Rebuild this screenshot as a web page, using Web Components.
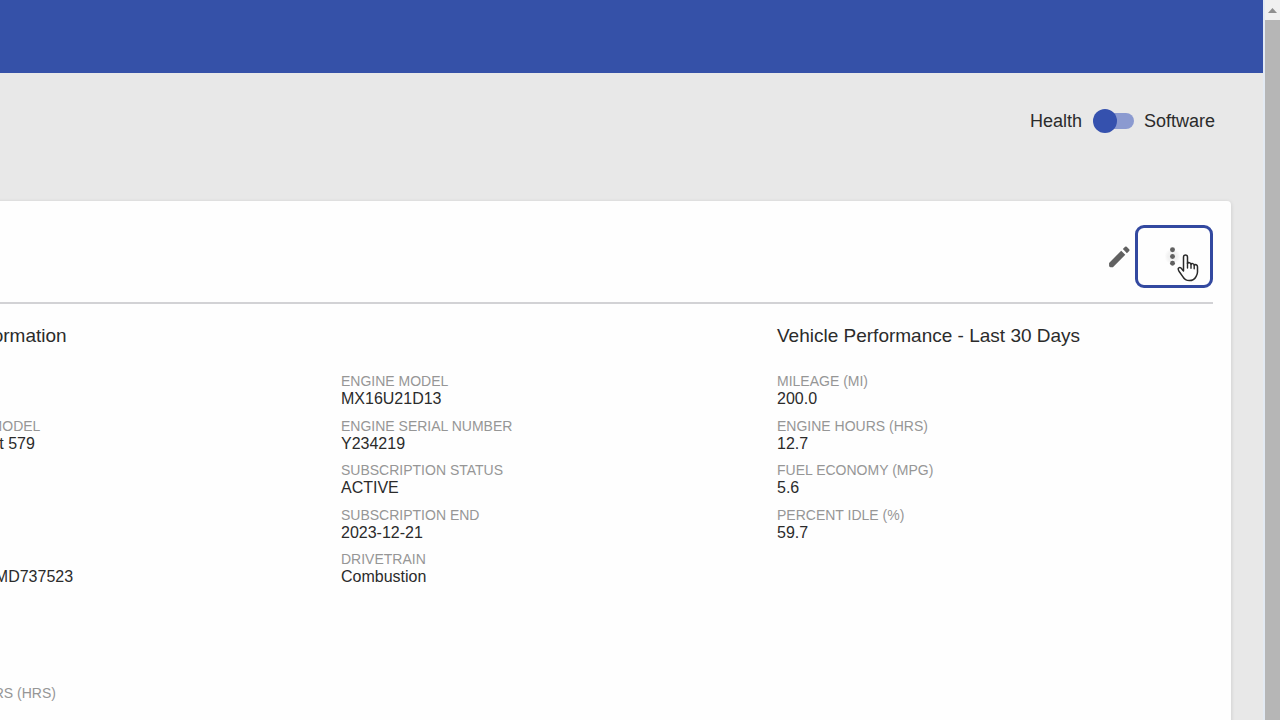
<!DOCTYPE html>
<html lang="en">
<head>
<meta charset="utf-8">
<title>Vehicle Details</title>
<style>
  html, body {
    margin: 0;
    height: 100%;
    overflow: hidden;
    font-family: "Liberation Sans", Arial, sans-serif;
    color: #2b2b2b;
  }
</style>
</head>
<body>

<fleet-page>
  <view-toggle slot="tools" left="Health" right="Software"></view-toggle>
  <vehicle-card>
    <info-column heading="Vehicle Information">
      <info-field></info-field>
      <info-field label="YEAR MAKE MODEL">2021 Peterbilt 579</info-field>
      <info-field></info-field>
      <info-field></info-field>
      <info-field label="">1XPBD49X1MD737523</info-field>
      <info-field></info-field>
      <info-field></info-field>
      <info-field label="ENGINE HOURS (HRS)"></info-field>
    </info-column>
    <info-column>
      <info-field label="ENGINE MODEL">MX16U21D13</info-field>
      <info-field label="ENGINE SERIAL NUMBER">Y234219</info-field>
      <info-field label="SUBSCRIPTION STATUS">ACTIVE</info-field>
      <info-field label="SUBSCRIPTION END">2023-12-21</info-field>
      <info-field label="DRIVETRAIN">Combustion</info-field>
    </info-column>
    <info-column heading="Vehicle Performance - Last 30 Days">
      <info-field label="MILEAGE (MI)">200.0</info-field>
      <info-field label="ENGINE HOURS (HRS)">12.7</info-field>
      <info-field label="FUEL ECONOMY (MPG)">5.6</info-field>
      <info-field label="PERCENT IDLE (%)">59.7</info-field>
    </info-column>
  </vehicle-card>
</fleet-page>

<script>
class FleetPage extends HTMLElement {
  constructor() {
    super();
    this.attachShadow({mode: 'open'});
  }

  connectedCallback() {
    this.shadowRoot.innerHTML = `
      <style>
        :host {
          display: flex;
          height: 100vh;
          background: #e8e8e8;
        }
        /* the page is wider than the window and sits scrolled to its right end */
        .view {
          flex: 1;
          min-width: 0;
          display: flex;
          justify-content: flex-end;
          overflow: hidden;
        }
        .page {
          flex: none;
          width: calc(100% + 145px);
          display: flex;
          flex-direction: column;
        }
        header {
          flex: none;
          height: 73px;
          background: #3551a8;
        }
        .tools {
          flex: none;
          display: flex;
          justify-content: flex-end;
          padding: 36px 48px 68px;
        }
        main {
          flex: 1;
          display: flex;
          padding: 0 32px;
        }
      </style>
      <div class="view">
        <div class="page">
          <header></header>
          <div class="tools"><slot name="tools"></slot></div>
          <main><slot></slot></main>
        </div>
      </div>
      <scroll-track></scroll-track>
    `;
  }
}

class ScrollTrack extends HTMLElement {
  constructor() {
    super();
    this.attachShadow({mode: 'open'});
  }

  connectedCallback() {
    this.shadowRoot.innerHTML = `
      <style>
        :host {
          display: flex;
          flex-direction: column;
          flex: none;
          width: 15px;
          border-left: 2px solid #e3eaf3;
          background: #f0f0f0;
        }
        svg {
          flex: none;
          display: block;
        }
        .thumb {
          flex: 1;
          background: #b6b6b6;
        }
      </style>
      <svg width="15" height="20" viewBox="0 0 15 20" aria-hidden="true">
        <path d="M3 13l4.500-5 4.500 5z" fill="#8f8f8f"/>
      </svg>
      <div class="thumb"></div>
    `;
  }
}

class ViewToggle extends HTMLElement {
  constructor() {
    super();
    this.attachShadow({mode: 'open'});
  }

  connectedCallback() {
    let left = this.getAttribute("left");
    let right = this.getAttribute("right");
    this.shadowRoot.innerHTML = `
      <style>
        :host {
          display: block;
        }
        label {
          display: flex;
          align-items: center;
          font-size: 18px;
          line-height: 24px;
          cursor: pointer;
        }
        input {
          appearance: none;
          display: flex;
          align-items: center;
          box-sizing: border-box;
          width: 36px;
          height: 16px;
          margin: 0 10px 0 16px;
          border-radius: 8px;
          background: #8b9ad0;
        }
        input::before {
          content: "";
          flex: none;
          width: 24px;
          height: 24px;
          margin-left: -5px;
          border-radius: 50%;
          background: #3551ae;
        }
        input:checked::before {
          margin-left: 17px;
        }
      </style>
      <label>
        <span>${left}</span>
        <input type="checkbox" role="switch">
        <span>${right}</span>
      </label>
    `;
  }
}

class VehicleCard extends HTMLElement {
  constructor() {
    super();
    this.attachShadow({mode: 'open'});
  }

  connectedCallback() {
    this.shadowRoot.innerHTML = `
      <style>
        :host {
          display: block;
          flex: 1;
          padding: 24px 18px 0;
          border-radius: 4px;
          background: #fefefe;
          box-shadow: 0 1px 4px rgba(0, 0, 0, 0.14);
        }
        .actions {
          display: flex;
          justify-content: flex-end;
          align-items: center;
          padding-bottom: 14px;
          border-bottom: 2px solid #d2d2d5;
        }
        button {
          display: flex;
          align-items: center;
          justify-content: center;
          padding: 0;
          border: 0;
          background: none;
          color: #616161;
          cursor: pointer;
        }
        svg {
          display: block;
          fill: currentColor;
        }
        .edit {
          width: 32px;
          height: 40px;
        }
        .more {
          position: relative;
          width: 78px;
          height: 63px;
          border: 3px solid #3349a0;
          border-radius: 9px;
          outline: none;
        }
        .dots {
          margin-right: 4px;
          border-radius: 50%;
          background: radial-gradient(circle, #ededed 0, #f3f3f3 5px, transparent 8px);
        }
        .pointer {
          position: absolute;
          left: 39px;
          top: 26px;
        }
        .columns {
          display: grid;
          grid-template-columns: repeat(3, 1fr);
          padding-top: 20px;
        }
      </style>
      <div class="actions">
        <button class="edit" type="button" aria-label="Edit vehicle">
          <svg width="28" height="28" viewBox="0 0 24 24">
            <path d="M3.500 17.100v2.400a1.200 1.200 0 0 0 1.200 1.200H6.800L17.400 10.100l-3.500-3.500L3.500 17.100zM20.710 6.800a1 1 0 0 0 0-1.410l-2.100-2.100a1 1 0 0 0-1.410 0l-1.900 1.900 3.500 3.500 1.900-1.900z"/>
          </svg>
        </button>
        <button class="more" type="button" aria-label="More actions">
          <svg class="dots" width="27" height="27" viewBox="0 0 24 24">
            <circle cx="12" cy="6" r="2.200"/>
            <circle cx="12" cy="12" r="2.200"/>
            <circle cx="12" cy="18" r="2.200"/>
          </svg>
          <svg class="pointer" width="22" height="28" viewBox="0 0 22 28" aria-hidden="true">
            <path d="M6.500 17V3.200C6.500 1.800 7.400 1 8.500 1s2 .8 2 2.200V9.500C10.800 8.200 13.900 8.300 14 10.300c.6-1.200 3-.9 3.200.8.900-.9 3.300-.5 3.300 1.700v5.200c0 2.200-.8 3.400-1.500 4.600-1.300 2.600-3.500 4-6.700 4-3.400 0-5-1.400-6.500-4L2 17.200C.900 15.200.900 14.300 1.800 13.800c1.200-.7 2.400.2 3.200 1.400z" fill="#fff" stroke="#2a2a2a" stroke-width="1.500" stroke-linejoin="round"/>
            <path d="M10.500 9v5M14 10.300V14.300M17.200 11V14.800" fill="none" stroke="#2a2a2a" stroke-width="1.400" stroke-linecap="round"/>
          </svg>
        </button>
      </div>
      <div class="columns"><slot></slot></div>
    `;
  }
}

class InfoColumn extends HTMLElement {
  constructor() {
    super();
    this.attachShadow({mode: 'open'});
  }

  connectedCallback() {
    let heading = this.getAttribute("heading") || "";
    this.shadowRoot.innerHTML = `
      <style>
        :host {
          display: block;
          min-width: 0;
        }
        .heading {
          min-height: 24px;
          margin: 0 0 24px;
          font-size: 19px;
          font-weight: normal;
          line-height: 24px;
        }
        .fields {
          display: grid;
          grid-template-rows: repeat(8, 1fr);
          min-height: 356px;
        }
      </style>
      ${heading ? `<h2 class="heading">${heading}</h2>` : `<div class="heading"></div>`}
      <div class="fields"><slot></slot></div>
    `;
  }
}

class InfoField extends HTMLElement {
  constructor() {
    super();
    this.attachShadow({mode: 'open'});
  }

  connectedCallback() {
    let label = this.getAttribute("label") || "";
    this.shadowRoot.innerHTML = `
      <style>
        :host {
          display: block;
          line-height: 18px;
          white-space: nowrap;
        }
        dl, dd {
          margin: 0;
        }
        dt {
          min-height: 18px;
          font-size: 14px;
          color: #969696;
        }
        dd {
          font-size: 16px;
        }
      </style>
      <dl>
        <dt>${label}</dt>
        <dd><slot></slot></dd>
      </dl>
    `;
  }
}

window.customElements.define('scroll-track', ScrollTrack);
window.customElements.define('fleet-page', FleetPage);
window.customElements.define('view-toggle', ViewToggle);
window.customElements.define('vehicle-card', VehicleCard);
window.customElements.define('info-column', InfoColumn);
window.customElements.define('info-field', InfoField);
</script>
</body>
</html>
